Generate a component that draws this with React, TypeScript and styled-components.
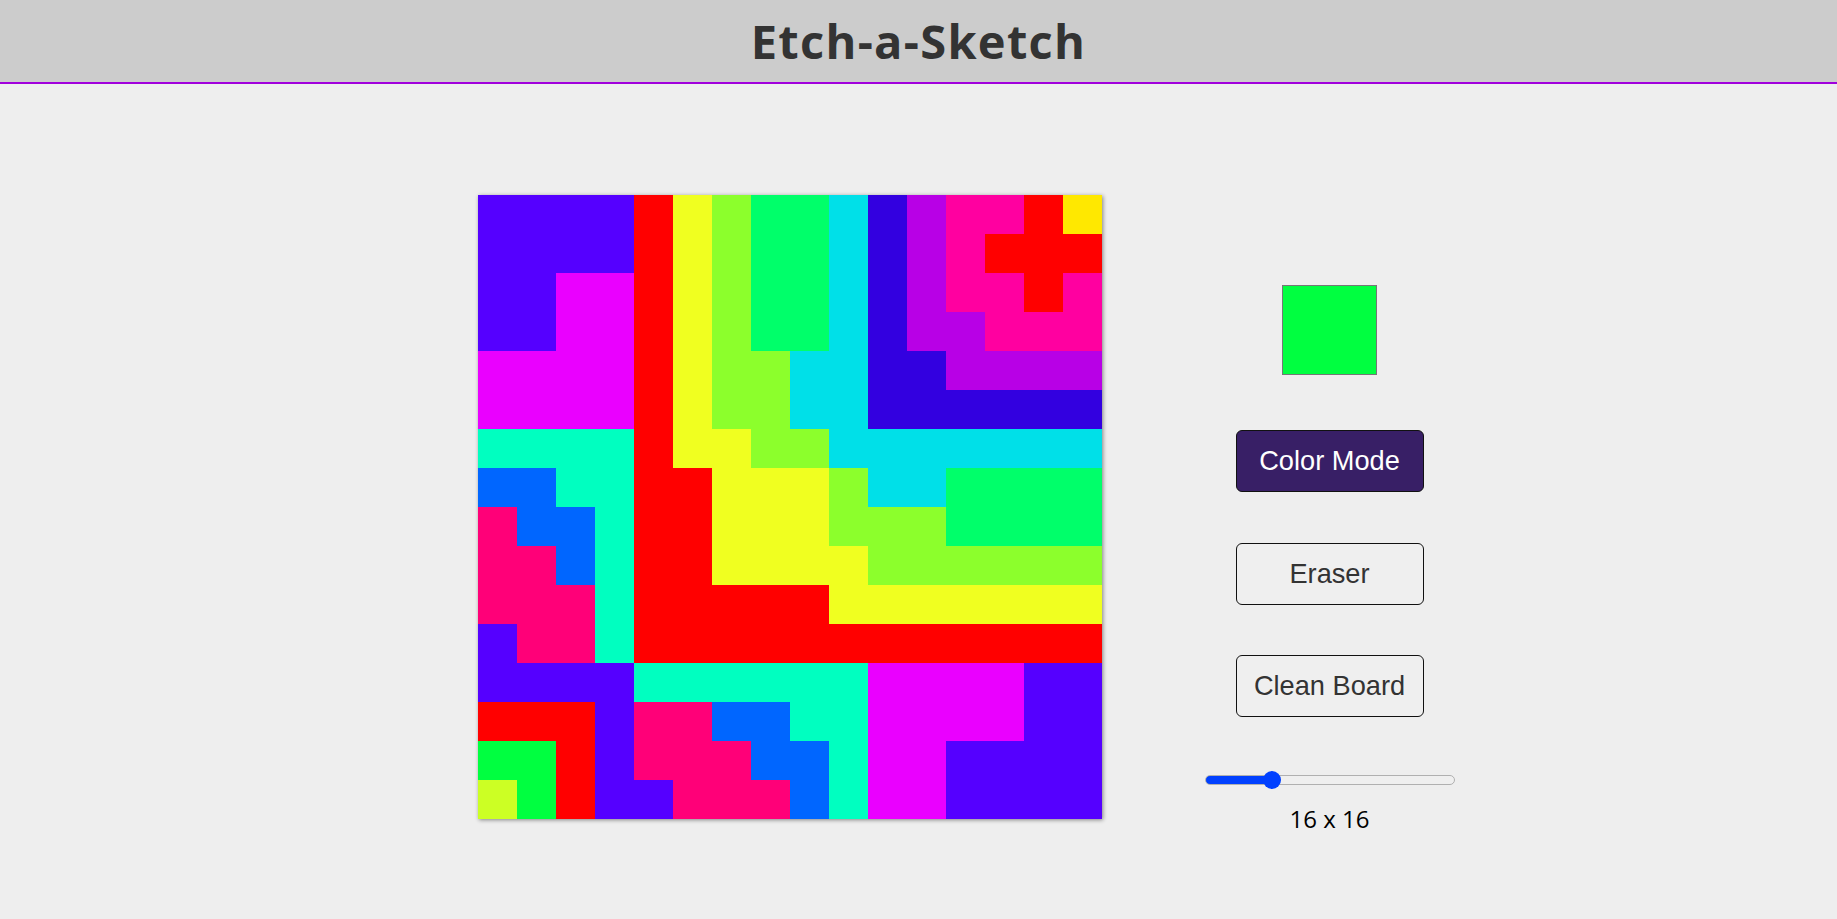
import React, { useState } from "react";
import styled, { createGlobalStyle } from "styled-components";

const GlobalStyle = createGlobalStyle`
  html, body {
    margin: 0;
    padding: 0;
    background: #eeeeee;
    font-family: "Open Sans", "Liberation Sans", sans-serif;
  }
  * { box-sizing: border-box; }
`;

const Header = styled.header`
  height: 84px;
  background: #cccccc;
  border-bottom: 2px solid #a100dc;
  display: flex;
  align-items: center;
  justify-content: center;
`;

const Title = styled.h1`
  margin: 0;
  font-family: "Open Sans", sans-serif;
  font-weight: 700;
  font-size: 47px;
  letter-spacing: 1.3px;
  color: #333333;
`;

const Main = styled.main`
  display: flex;
  justify-content: center;
  align-items: flex-start;
  gap: 103px;
  padding: 111px 0 0 95px;
`;

const Board = styled.div`
  display: grid;
  grid-template-columns: repeat(16, 39px);
  grid-template-rows: repeat(16, 39px);
  width: 624px;
  height: 624px;
  box-shadow: 1px 1px 4px rgba(0, 0, 0, 0.45);
`;

const Cell = styled.div<{ $c: string }>`
  background: ${(p) => p.$c};
`;

const Controls = styled.div`
  width: 250px;
  margin-top: 90px;
  display: flex;
  flex-direction: column;
  align-items: center;
`;

const Swatch = styled.div<{ $c: string }>`
  width: 95px;
  height: 90px;
  background: ${(p) => p.$c};
  border: 1px solid #767676;
`;

const Button = styled.button<{ $active?: boolean; $mt: number }>`
  width: 188px;
  height: 62px;
  margin-top: ${(p) => p.$mt}px;
  border: 1px solid #111;
  border-radius: 6px;
  background: ${(p) => (p.$active ? "#381f66" : "#efefef")};
  color: ${(p) => (p.$active ? "#ffffff" : "#333333")};
  font-family: "Liberation Sans", Arial, sans-serif;
  font-size: 27.2px;
  padding: 0;
  cursor: pointer;
`;

const Range = styled.input<{ $pct: number }>`
  -webkit-appearance: none;
  appearance: none;
  width: 250px;
  height: 18px;
  margin: 54px 0 0 0;
  background: transparent;
  &::-webkit-slider-runnable-track {
    height: 10px;
    border-radius: 5px;
    border: 1px solid #b0b0b0;
    background: linear-gradient(
      to right,
      #0040ff 0,
      #0040ff ${(p) => p.$pct}%,
      #efefef ${(p) => p.$pct}%,
      #efefef 100%
    );
  }
  &::-webkit-slider-thumb {
    -webkit-appearance: none;
    appearance: none;
    width: 18px;
    height: 18px;
    border-radius: 50%;
    background: #0040ff;
    border: none;
    margin-top: -5px;
  }
`;

const SizeLabel = styled.div`
  margin-top: 13px;
  font-family: "Open Sans", sans-serif;
  font-size: 24px;
  color: #000;
`;

const COLORS: Record<string, string> = {
  P: "#5500ff",
  M: "#ea00ff",
  R: "#ff0000",
  Y: "#f0ff20",
  L: "#8cff2c",
  G: "#00ff6a",
  C: "#00e0e8",
  D: "#3300e0",
  V: "#b800e6",
  K: "#ff00a0",
  T: "#00ffc0",
  B: "#0066ff",
  N: "#ff0078",
  E: "#00ff40",
  A: "#ccff24",
  O: "#ffe800",
};

const ROWS = [
  "PPPPRYLGGCDVKKRO",
  "PPPPRYLGGCDVKRRR",
  "PPMMRYLGGCDVKKRK",
  "PPMMRYLGGCDVVKKK",
  "MMMMRYLLCCDDVVVV",
  "MMMMRYLLCCDDDDDD",
  "TTTTRYYLLCCCCCCC",
  "BBTTRRYYYLCCGGGG",
  "NBBTRRYYYLLLGGGG",
  "NNBTRRYYYYLLLLLL",
  "NNNTRRRRRYYYYYYY",
  "PNNTRRRRRRRRRRRR",
  "PPPPTTTTTTMMMMPP",
  "RRRPNNBBTTMMMMPP",
  "EERPNNNBBTMMPPPP",
  "AERPPNNNBTMMPPPP",
];

export default function App() {
  const [size, setSize] = useState(16);
  const [mode, setMode] = useState("color");
  const min = 0;
  const max = 64;
  const pct = ((size - min) / (max - min)) * 100 + 0.8;

  return (
    <>
      <GlobalStyle />
      <Header>
        <Title>Etch-a-Sketch</Title>
      </Header>
      <Main>
        <Board>
          {ROWS.flatMap((row, r) =>
            row.split("").map((ch, c) => <Cell key={`${r}-${c}`} $c={COLORS[ch]} />)
          )}
        </Board>
        <Controls>
          <Swatch $c="#00ff40" />
          <Button $mt={55} $active={mode === "color"} onClick={() => setMode("color")}>
            Color Mode
          </Button>
          <Button $mt={51} $active={mode === "eraser"} onClick={() => setMode("eraser")}>
            Eraser
          </Button>
          <Button $mt={50}>Clean Board</Button>
          <Range
            type="range"
            min={min}
            max={max}
            value={size}
            $pct={pct}
            onChange={(e) => setSize(Number(e.target.value))}
          />
          <SizeLabel>
            {size} x {size}
          </SizeLabel>
        </Controls>
      </Main>
    </>
  );
}
